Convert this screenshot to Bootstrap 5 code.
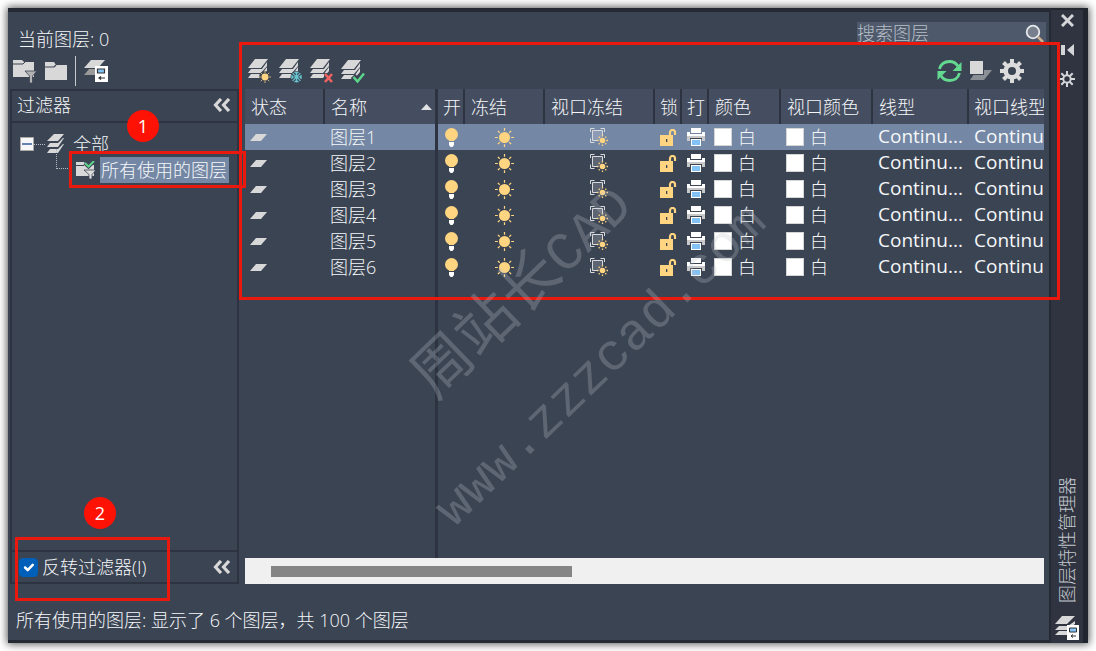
<!DOCTYPE html>
<html lang="zh-CN">
<head>
<meta charset="utf-8">
<meta name="viewport" content="width=device-width, initial-scale=1">
<title>图层特性管理器</title>
<link rel="stylesheet" href="https://cdn.jsdelivr.net/npm/bootstrap@5.3.0/dist/css/bootstrap.min.css">
<style>
:root{--pane:#3b4453;--line:#2d3340;--head:#454e60;--pick:#7487a4;--ink:#f5f7f9;--mark:#ea180d}
body{font-family:"Open Sans","Noto Sans CJK SC",sans-serif;font-size:18px;line-height:26px;font-weight:300;color:var(--ink);background:#fff;overflow:hidden}
.palette{margin:8px;min-height:calc(100vh - 16px);background:var(--pane);box-shadow:0 0 8px 1px #555;position:relative}
.palette-main{border:solid #252a34;border-width:4px 2px 3px 0;padding:10px 3px 0 2px;min-width:0}
.title-row{height:34px;padding-left:8px}
.search-box{width:189px;height:22px;background:#4e5a6c}
.search-box input{font:inherit;color:#b9bec6;background:none;border:0;padding:0;min-width:0;outline:0}
.search-box input::placeholder{color:#b9bec6;opacity:1}
.side-col{width:229px}
.list-col{min-width:0;margin:0 2px 0 6px}
.list-col,.mark-host{position:relative}
.tools{height:33px;padding:0 0 3px 3px}
.bare{background:none;border:0;padding:0;display:flex;color:#d8d8d8}
svg{display:block;flex:none}
.filter-pane{border:2px solid var(--line)}
.filter-head{height:32px;border-bottom:2px solid var(--line);padding:0 6px 2px 5px}
.filter-foot{height:32px;border-top:2px solid var(--line);padding:0 6px 0 7px}
.filter-foot .form-check-input{width:19px;height:19px;margin:0;border-radius:4px;background-color:#005fb8;border-color:#005fb8}
.tree{padding:8px 0 0 8px}
.tree-row{height:26px}
.twig{width:11px;border-top:1px dotted #b5bac3;margin-right:2px}
.elbow{width:16px;height:20px;margin:-8px 0 0 36px;border:dotted #b5bac3;border-width:0 0 1px 1px;align-self:start}
.stack-icon{margin-right:8px}
.picked{background:var(--pick);padding:0 2px 0 1px;color:var(--ink);text-decoration:none}
.grid-area{background:linear-gradient(var(--line),var(--line)) 190px 0/3px 100% no-repeat;overflow:hidden}
.layers{table-layout:fixed;width:100%;border-collapse:separate;border-spacing:0}
.layers th{height:35px;font-weight:300;background:var(--head);border-right:2px solid var(--line);padding:0 0 0 6px;white-space:nowrap;overflow:hidden}
.layers td{height:26px;padding:0 0 0 5px;white-space:nowrap;overflow:hidden}
.layers .split{border-right:3px solid var(--line)}
.layers th:last-child{border-right:0}
.layers .tight{padding:0 0 0 5px}
.layers .mid{padding:0 2px 0 0}
.layers tr.current td{background:var(--pick)}
.layers .kind{font-size:19px;font-weight:400;line-height:24px;padding-bottom:2px}
.swatch{width:18px;height:18px;background:#fff;border:1px solid #d5d5d5;margin-right:6px}
.scroll-track{height:26px;background:#f0f0f0;padding:8px 26px 0}
.scroll-thumb{height:11px;background:#858585}
.status{height:56px;padding:23px 0 0 6px}
.rail{width:37px;background:#2f3440;border-right:5px solid #22262f;border-top:2px solid #22262f;padding-bottom:2px;gap:8px}
.rail .bare{color:#d3d5d9;height:21px;align-items:center}
.rail-title{writing-mode:vertical-rl;text-orientation:sideways;transform:rotate(180deg);color:#c3c7ce}
.frame{position:absolute;border:3px solid var(--mark);pointer-events:none;z-index:2}
.frame-list{top:-14px;left:-6px;right:-16px;height:258px}
.frame-used{top:28px;left:57px;width:177px;height:37px}
.frame-invert{top:-15px;left:3px;width:155px;height:64px}
.pin{position:absolute;width:32px;height:32px;border-radius:50%;background:#fd1205;color:#fff;display:flex;align-items:center;justify-content:center;z-index:3;font-weight:400}
.pin-one{left:115px;top:-13px}
.pin-two{left:72px;top:-55px}
.watermark{position:absolute;color:rgba(190,195,205,.27);white-space:pre;line-height:1;transform:translate(-50%,-50%) rotate(-44deg);pointer-events:none;z-index:4;font-weight:400}
.wm-name{left:512px;top:281px;font-size:60px;font-family:"Noto Sans CJK SC",sans-serif}
.wm-name span,.wm-site{font-family:"Liberation Mono",monospace}
.wm-name span{font-size:54px}
.wm-site{left:594px;top:359px;font-size:52px}
</style>
</head>
<body>
<svg width="0" height="0" class="position-absolute" aria-hidden="true">
<defs>
<symbol id="stack" viewBox="0 0 24 24"><g fill="#d8d8d8"><path d="M7 0h13l-7 9H0z"/><path d="M0 14l3-4h11l5-7v4l-6 7z"/><path d="M0 19l3-4h11l5-7v4l-6 7z"/></g></symbol>
<symbol id="sun" viewBox="0 0 20 20"><circle cx="10" cy="10" r="5.8" fill="#ffd581"/><path d="M10 0v3M10 17v3M0 10h3M17 10h3M3 3l2 2M15 15l2 2M3 17l2-2M15 5l2-2" stroke="#ffd581" stroke-width="1.3"/></symbol>
<symbol id="bulb" viewBox="0 0 14 19"><circle cx="7" cy="6.5" r="6.5" fill="#ffd581"/><path d="M4.500 14h5v3l-1.500 2h-2l-1.500-2z" fill="#fff"/><path d="M4.500 12h5v1h-5z" fill="#ffd581"/></symbol>
<symbol id="vpsun" viewBox="0 0 20 20"><path d="M3.500 3.500h10v10h-10z" fill="#fff" fill-opacity=".18"/><path d="M1.500 5V1.500h4M11.500 1.500h4V5M1.500 11.500v4h4M3.500 13.500v-10h10V8M3.500 13.500H8" fill="none" stroke="#d8dade"/><circle cx="13.500" cy="13.500" r="2.800" fill="#ffd581"/><path d="M13.500 8v1.500M13.500 17.500V19M8 13.500h1.500M17.500 13.500H19M9.700 9.700l1 1M16.300 16.300l1 1M9.700 17.300l1-1M16.300 10.700l1-1" stroke="#ffd581" stroke-width="1.3"/></symbol>
<symbol id="lock" viewBox="0 0 17 17"><path d="M0 6h13v11H0z" fill="#ffd581"/><path d="M10 6V3.500a2.500 2.500 0 0 1 5 0V6" fill="none" stroke="#ffd581" stroke-width="2.200"/><path d="M6 10h1.300v3H6z" fill="#3b4453"/></symbol>
<symbol id="printer" viewBox="0 0 18 18"><path d="M4 0h10v5H4z" fill="#fff"/><path d="M0 4h3v2h12V4h3v4H0z" fill="#fff"/><path d="M0 8h18v5h-3v-2H3v2H0z" fill="#c9c9c9"/><path d="M3 10h12v1H3z" fill="#3b4453"/><path d="M4 11h10v7H4z" fill="#fff"/><path d="M5 12h8v5H5z" fill="#83c2f7"/></symbol>
<symbol id="flat" viewBox="0 0 17 7"><path d="M6 0h11l-6 7H0z" fill="#d8d8d8"/></symbol>
<symbol id="states" viewBox="0 0 24 24"><path d="M7 1h14l-7 8H0z" fill="#d8d8d8"/><path d="M5 10h7v6H0z" fill="#999"/><path d="M11 7h13v16H11z" fill="#fff"/><path d="M13.500 10h7v4h-7z" fill="#83c2f7" stroke="#333" stroke-width="1.200"/><path d="M21 19h-6m2-1.500L15 19l2 1.500" fill="none" stroke="#333" stroke-width="1.200"/></symbol>
<symbol id="folder" viewBox="0 0 22 18"><path d="M0 0h9l2 3h11v15H0z" fill="#d8d8d8"/><path d="M0 5h9l2-2" fill="none" stroke="#3b4453" stroke-width="1.200"/></symbol>
<symbol id="chev" viewBox="0 0 18 14"><path d="M8 1L2.500 7 8 13M16 1l-5.500 6 5.500 6" fill="none" stroke="currentColor" stroke-width="3.200"/></symbol>
</defs>
</svg>

<div class="palette d-flex">
  <main class="palette-main d-flex flex-column flex-grow-1">
    <header class="title-row d-flex justify-content-between">
      <span class="align-self-center">当前图层: 0</span>
      <label class="search-box d-flex align-items-center">
        <input type="search" class="flex-grow-1" placeholder="搜索图层" aria-label="搜索图层">
        <svg width="22" height="20" viewBox="0 0 22 20"><circle cx="9" cy="9" r="6.300" fill="#78808e" stroke="#e6e8ea" stroke-width="1.800"/><path d="M14 14l5 5" stroke="#cdb08f" stroke-width="2.500"/></svg>
      </label>
    </header>

    <div class="d-flex flex-grow-1">
      <section class="side-col d-flex flex-column flex-shrink-0">
        <div class="tools d-flex align-items-center gap-2">
          <button class="bare" aria-label="新建特性过滤器"><svg width="24" height="24" viewBox="0 0 24 24"><path d="M0 1h9l2 2h10v15H0z" fill="#d8d8d8"/><path d="M0 5h10l2-2" fill="none" stroke="#3b4453"/><path d="M12 12h12l-4.500 5v7h-3v-7z" fill="#b4b4b4" stroke="#3b4453" stroke-width=".8"/></svg></button>
          <button class="bare" aria-label="新建组过滤器"><svg width="22" height="18"><use href="#folder"/></svg></button>
          <span class="vr opacity-75"></span>
          <button class="bare" aria-label="图层状态管理器"><svg width="24" height="24"><use href="#states"/></svg></button>
        </div>
        <div class="filter-pane d-flex flex-column flex-grow-1">
          <div class="filter-head d-flex justify-content-between align-items-center"><span>过滤器</span><button class="bare" aria-label="折叠过滤器树"><svg width="18" height="14"><use href="#chev"/></svg></button></div>
          <div class="tree flex-grow-1 mark-host">
            <div class="tree-row d-flex align-items-center">
              <svg width="14" height="14" viewBox="0 0 14 14"><path d="M.5.5h13v13H.5z" fill="#f7f7f7" stroke="#aaa"/><path d="M2 7h10" stroke="#315c9b" stroke-width="1.500"/></svg>
              <span class="twig"></span>
              <svg class="stack-icon" width="18" height="20" viewBox="0 0 18 20"><g fill="#d8d8d8"><path d="M7 0h10l-6 7H0z"/><path d="M0 13l3-4h8l5-5h1l-6 9zM0 19l3-4h8l5-5h1l-6 9z"/></g></svg>
              <span>全部</span>
            </div>
            <div class="tree-row d-flex align-items-center">
              <span class="elbow"></span>
              <svg class="ms-1 me-1" width="20" height="18" viewBox="0 0 20 18"><path d="M0 1h8l2 3h8v11H0z" fill="#d8d8d8"/><path d="M0 4.500h8" stroke="#3b4453"/><path d="M9 2l3.500 3.500L18 0" fill="none" stroke="#3b4453" stroke-width="4"/><path d="M9 2l3.500 3.500L18 0" fill="none" stroke="#5fd28c" stroke-width="2"/><path d="M8 9h12l-4 4.500V18h-3v-4.500z" fill="#ddd" stroke="#3b4453" stroke-width=".8"/></svg>
              <a href="#" class="picked">所有使用的图层</a>
            </div>
            <div class="pin pin-one">1</div>
            <div class="frame frame-used"></div>
          </div>
          <div class="filter-foot d-flex justify-content-between align-items-center mark-host">
            <div class="d-flex align-items-center gap-1"><input class="form-check-input" type="checkbox" id="invert" checked><label for="invert">反转过滤器(I)</label></div>
            <button class="bare" aria-label="折叠面板"><svg width="18" height="14"><use href="#chev"/></svg></button>
            <div class="frame frame-invert"></div>
            <div class="pin pin-two">2</div>
          </div>
        </div>
      </section>

      <section class="list-col d-flex flex-column flex-grow-1">
        <div class="tools d-flex align-items-center justify-content-between">
          <div class="d-flex" style="gap:7px">
            <button class="bare" aria-label="新建图层"><svg width="24" height="24" viewBox="0 0 24 24"><use href="#stack"/><circle cx="17" cy="18" r="6" fill="#3b4453"/><use href="#sun" x="11" y="12" width="12" height="12"/></svg></button>
            <button class="bare" aria-label="新建冻结图层"><svg width="24" height="24" viewBox="0 0 24 24"><use href="#stack"/><circle cx="17.500" cy="18" r="6" fill="#3b4453"/><path d="M17.500 12.500v11M12 18h11M13.600 14.100l7.800 7.800M21.400 14.100l-7.800 7.800M15.500 13l2 1.500 2-1.500M15.500 23l2-1.500 2 1.500M12.500 16l1.500 2-1.500 2M22.500 16L21 18l1.500 2" fill="none" stroke="#69c5d0" stroke-width="1.200"/></svg></button>
            <button class="bare" aria-label="删除图层"><svg width="24" height="24" viewBox="0 0 24 24"><use href="#stack"/><path d="M14 14h10v10H14z" fill="#3b4453"/><path d="M15 15l7 8M22 15l-7 8" stroke="#ef6262" stroke-width="2.600"/></svg></button>
            <button class="bare" aria-label="置为当前"><svg width="24" height="24" viewBox="0 0 24 24"><use href="#stack" y="1"/><path d="M12 17l4.500 5L23 14" fill="none" stroke="#3b4453" stroke-width="6"/><path d="M12.500 18l4 4.500L23 14.500" fill="none" stroke="#5bd489" stroke-width="2.500"/></svg></button>
          </div>
          <div class="d-flex align-items-center gap-2 pe-3 me-1">
            <button class="bare" aria-label="刷新"><svg width="25" height="22" viewBox="0 0 25 22"><g fill="none" stroke="#63da90" stroke-width="2.800"><path d="M2.500 9C4 3.500 8 1.500 12.500 1.500c3.500 0 6.500 1.500 8.300 4.500M22.500 13c-1.500 5.500-5.500 7.500-10 7.500-3.500 0-6.500-1.500-8.300-4.500"/></g><path d="M24.500 2v9h-9zM.5 20v-9h9z" fill="#63da90"/></svg></button>
            <button class="bare" aria-label="切换替代亮显"><svg width="22" height="20" viewBox="0 0 22 20"><path d="M7 9h15l-8 10H0z" fill="#8b8f96"/><path d="M0 0h14v14H0z" fill="#3b4453"/><path d="M0 0h13v13H0z" fill="#d8d8d8"/></svg></button>
            <button class="bare" aria-label="设置"><svg width="24" height="24" viewBox="0 0 24 24"><circle cx="12" cy="12" r="6.300" fill="none" stroke="#dcdcdc" stroke-width="4.600"/><path d="M12 0v4.500M12 19.500V24M0 12h4.500M19.500 12H24M3.500 3.500l3.200 3.200M17.300 17.300l3.200 3.200M3.500 20.500l3.200-3.200M17.300 6.700l3.200-3.200" stroke="#dcdcdc" stroke-width="4"/></svg></button>
          </div>
        </div>
        <div class="grid-area flex-grow-1">
          <table class="layers">
            <colgroup><col style="width:80px"><col style="width:113px"><col style="width:27px"><col style="width:80px"><col style="width:110px"><col style="width:27px"><col style="width:27px"><col style="width:72px"><col style="width:92px"><col style="width:96px"><col></colgroup>
            <thead><tr><th>状态</th><th class="split"><div class="d-flex align-items-center justify-content-between">名称<svg width="14" height="6"><path d="M5.500 0L11 6H0z" fill="#dfe1e4"/></svg></div></th><th class="tight">开</th><th>冻结</th><th>视口冻结</th><th class="tight">锁</th><th class="tight">打</th><th>颜色</th><th>视口颜色</th><th>线型</th><th class="tight">视口线型</th></tr></thead>
            <tbody id="rows"></tbody>
          </table>
        </div>
        <div class="scroll-track"><div class="scroll-thumb" style="width:40.3%"></div></div>
        <div class="frame frame-list"></div>
      </section>
    </div>

    <footer class="status">所有使用的图层: 显示了 6 个图层，共 100 个图层</footer>
  </main>

  <aside class="rail d-flex flex-column align-items-center flex-shrink-0">
    <button class="bare" aria-label="关闭"><svg width="13" height="13" viewBox="0 0 13 13"><path d="M1 1l11 11M12 1L1 12" stroke="currentColor" stroke-width="3"/></svg></button>
    <button class="bare" aria-label="自动隐藏"><svg width="13" height="12" viewBox="0 0 13 12"><path d="M0 1h4v10H0zM13 0v12L6 6z" fill="currentColor"/></svg></button>
    <button class="bare" aria-label="特性"><svg width="16" height="16" viewBox="0 0 16 16"><circle cx="8" cy="8" r="3.700" fill="none" stroke="currentColor" stroke-width="2"/><path d="M8 0v4M8 12v4M0 8h4M12 8h4M2.300 2.300l3 3M10.700 10.700l3 3M2.300 13.700l3-3M10.700 5.300l3-3" stroke="currentColor" stroke-width="2"/></svg></button>
    <span class="rail-title mt-auto mb-1">图层特性管理器</span>
    <svg width="26" height="26" viewBox="0 0 26 26"><g fill="#d8d8d8"><path d="M8 1h13l-8 8H1z"/><path d="M1 15l4-4h9l7-5v3l-8 6zM1 20l4-4h9v4z"/></g><path d="M13 10h12v15H13z" fill="#fff"/><path d="M15.500 13h7v4h-7z" fill="#83c2f7" stroke="#333"/><path d="M22 21h-5m2-1.500L17 21l2 1.500" fill="none" stroke="#333"/></svg>
  </aside>

  <div class="watermark wm-name">周站长<span>CAD</span></div>
  <div class="watermark wm-site">www.zzzcad.com</div>
</div>

<script>
const icon = (id, w, h, cls = '') => `<svg class="${cls}" width="${w}" height="${h}"><use href="#${id}"/></svg>`;
const white = '<div class="d-flex align-items-center"><span class="swatch"></span>白</div>';
document.getElementById('rows').innerHTML = [1, 2, 3, 4, 5, 6].map(n => `
<tr class="${n === 1 ? 'current' : ''}">
<td>${icon('flat', 17, 7)}</td><td class="split">图层${n}</td>
<td>${icon('bulb', 17, 19)}</td>
<td class="mid">${icon('sun', 19, 19, 'mx-auto')}</td><td class="mid">${icon('vpsun', 20, 20, 'mx-auto')}</td>
<td>${icon('lock', 17, 17)}</td><td>${icon('printer', 18, 18)}</td>
<td>${white}</td><td>${white}</td><td class="kind">Continu...</td><td class="kind">Continu</td>
</tr>`).join('');
</script>
<script src="https://cdn.jsdelivr.net/npm/bootstrap@5.3.0/dist/js/bootstrap.bundle.min.js"></script>
</body>
</html>
